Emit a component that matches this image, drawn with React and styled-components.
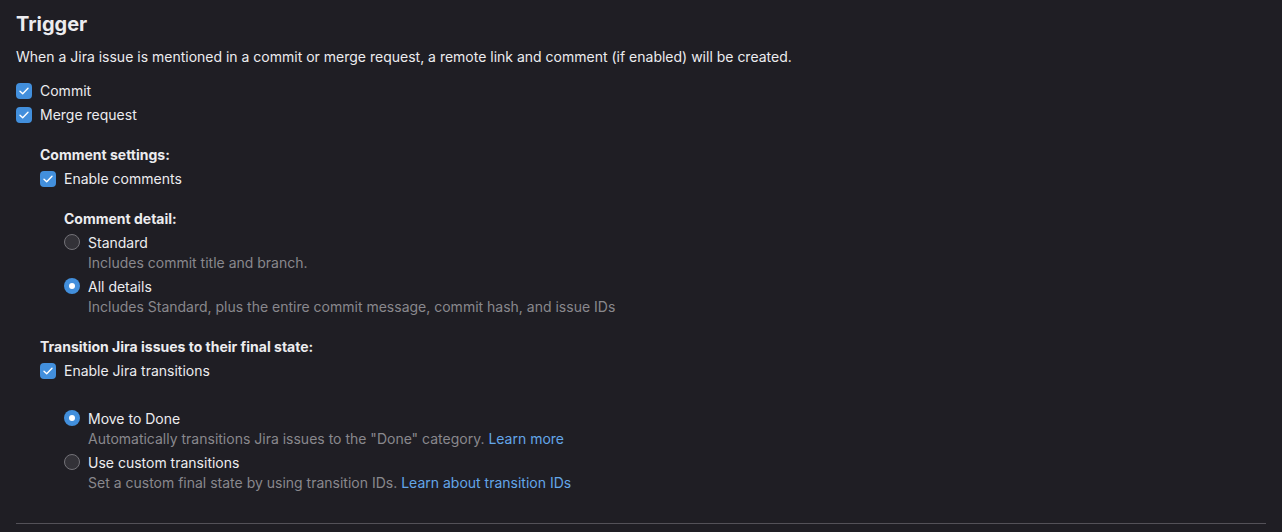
import React from 'react'
import styled, { createGlobalStyle } from 'styled-components'

const GlobalStyle = createGlobalStyle`
	body {
		margin: 0;
		background: #1f1e24;
		font-family: Inter, "Noto Sans", "Liberation Sans", sans-serif;
		color: #ececef;
		font-size: 14px;
	}
`

const Page = styled.div`
	padding: 12px 16px 0;
	height: 532px;
	box-sizing: border-box;
`

const Title = styled.h2`
	margin: 0 0 11px;
	font-size: 20px;
	line-height: 24px;
	font-weight: 700;
	color: #ececef;
`

const Lead = styled.p`
	margin: 0 0 12px;
	line-height: 20px;
`

const Group = styled.div`
	padding-left: ${p => p.indent || 0}px;
	margin-top: ${p => p.top || 0}px;
`

const Heading = styled.div`
	font-weight: 700;
	line-height: 20px;
	margin-bottom: 2px;
`

const Option = styled.label`
	display: flex;
	align-items: flex-start;
	gap: 8px;
	margin-bottom: ${p => p.gap || 0}px;
`

const Box = styled.span`
	flex: none;
	width: 16px;
	height: 16px;
	margin-top: 4px;
	border-radius: 4px;
	background: #428fdc;
	display: flex;
	align-items: center;
	justify-content: center;
`

const Radio = styled.span`
	flex: none;
	width: 16px;
	height: 16px;
	margin-top: 3px;
	border-radius: 50%;
	box-sizing: border-box;
	background: ${p => (p.checked ? '#428fdc' : '#333238')};
	border: ${p => (p.checked ? 'none' : '1px solid #737278')};
	display: flex;
	align-items: center;
	justify-content: center;
	&::after {
		content: '';
		display: ${p => (p.checked ? 'block' : 'none')};
		width: 6px;
		height: 6px;
		border-radius: 50%;
		background: #fff;
	}
`

const Label = styled.span`
	display: block;
	line-height: 20px;
	padding: ${p => (p.tall ? '2px 0' : '2px 0 0')};
`

const Help = styled.div`
	color: #89888d;
	line-height: 20px;
`

const Link = styled.a`
	color: #63a6e9;
	text-decoration: none;
`

const Divider = styled.hr`
	margin: 30px 0 0;
	border: none;
	border-top: 1px solid #535158;
`

const Check = () => (
	<Box>
		<svg width="10" height="8" viewBox="0 0 10 8" fill="none">
			<path d="M1 4.2 3.7 6.8 9 1.2" stroke="#fff" strokeWidth="1.4" strokeLinecap="round" strokeLinejoin="round" />
		</svg>
	</Box>
)

const CheckRow = ({ children }) => (
	<Option>
		<Check />
		<Label tall>{children}</Label>
	</Option>
)

const RadioRow = ({ checked, title, help, gap }) => (
	<Option gap={gap}>
		<Radio checked={checked} />
		<div>
			<Label>{title}</Label>
			<Help>{help}</Help>
		</div>
	</Option>
)

export default function App() {
	return (
		<Page>
			<GlobalStyle />
			<Title>Trigger</Title>
			<Lead>
				When a Jira issue is mentioned in a commit or merge request, a remote link and comment (if enabled) will be
				created.
			</Lead>
			<CheckRow>Commit</CheckRow>
			<CheckRow>Merge request</CheckRow>

			<Group indent={24} top={18}>
				<Heading>Comment settings:</Heading>
				<CheckRow>Enable comments</CheckRow>

				<Group indent={24} top={18}>
					<Heading>Comment detail:</Heading>
					<RadioRow title="Standard" help="Includes commit title and branch." gap={2} />
					<RadioRow
						checked
						title="All details"
						help="Includes Standard, plus the entire commit message, commit hash, and issue IDs"
					/>
				</Group>

				<Group top={20}>
					<Heading>Transition Jira issues to their final state:</Heading>
					<CheckRow>Enable Jira transitions</CheckRow>
				</Group>

				<Group indent={24} top={24}>
					<RadioRow
						checked
						gap={2}
						title="Move to Done"
						help={
							<>
								Automatically transitions Jira issues to the "Done" category. <Link href="#">Learn more</Link>
							</>
						}
					/>
					<RadioRow
						title="Use custom transitions"
						help={
							<>
								Set a custom final state by using transition IDs. <Link href="#">Learn about transition IDs</Link>
							</>
						}
					/>
				</Group>
			</Group>
			<Divider />
		</Page>
	)
}
